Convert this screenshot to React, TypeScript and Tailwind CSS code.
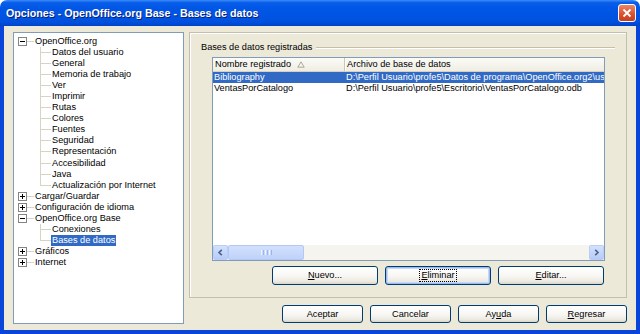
import React from "react"

type TreeItem = {
  label: string
  kind: "plus" | "minus" | "child"
  last?: boolean
  selected?: boolean
}

const TREE: TreeItem[] = [
  { label: "OpenOffice.org", kind: "minus" },
  { label: "Datos del usuario", kind: "child" },
  { label: "General", kind: "child" },
  { label: "Memoria de trabajo", kind: "child" },
  { label: "Ver", kind: "child" },
  { label: "Imprimir", kind: "child" },
  { label: "Rutas", kind: "child" },
  { label: "Colores", kind: "child" },
  { label: "Fuentes", kind: "child" },
  { label: "Seguridad", kind: "child" },
  { label: "Representación", kind: "child" },
  { label: "Accesibilidad", kind: "child" },
  { label: "Java", kind: "child" },
  { label: "Actualización por Internet", kind: "child", last: true },
  { label: "Cargar/Guardar", kind: "plus" },
  { label: "Configuración de idioma", kind: "plus" },
  { label: "OpenOffice.org Base", kind: "minus" },
  { label: "Conexiones", kind: "child" },
  { label: "Bases de datos", kind: "child", last: true, selected: true },
  { label: "Gráficos", kind: "plus" },
  { label: "Internet", kind: "plus" },
]

const ROWS = [
  {
    name: "Bibliography",
    path: "D:\\Perfil Usuario\\profe5\\Datos de programa\\OpenOffice.org2\\user",
    selected: true,
  },
  {
    name: "VentasPorCatalogo",
    path: "D:\\Perfil Usuario\\profe5\\Escritorio\\VentasPorCatalogo.odb",
    selected: false,
  },
]

// ── Tree ──────────────────────────────────────────────────────────────────

function Expander({ open }: { open: boolean }) {
  return (
    <svg width="9" height="9" viewBox="0 0 9 9" className="shrink-0">
      <rect x="0.5" y="0.5" width="8" height="8" fill="#fff" stroke="#848484" />
      <path d="M2 4.5h5" stroke="#000" />
      {!open && <path d="M4.5 2v5" stroke="#000" />}
    </svg>
  )
}

function TreeRow({ item }: { item: TreeItem }) {
  if (item.kind === "child") {
    return (
      <div className="h-[11.1px] flex items-center">
        <div className="w-[26px] shrink-0" />
        <div className="w-[1px] h-full flex flex-col shrink-0">
          <div className={`${item.last ? "h-[6px]" : "h-full"} w-[1px] bg-[#d8d4c4]`} />
        </div>
        <div className="w-[10px] h-[1px] bg-[#d8d4c4] shrink-0" />
        <span
          className={`px-[1px] leading-[11px] whitespace-nowrap ${
            item.selected ? "bg-[#316ac5] text-white" : "text-black"
          }`}
        >
          {item.label}
        </span>
      </div>
    )
  }
  return (
    <div className="h-[11.1px] flex items-center">
      <div className="w-[4px] shrink-0" />
      <Expander open={item.kind === "minus"} />
      <div className="w-[7px] h-[1px] bg-[#d8d4c4] shrink-0" />
      <span className="px-[1px] leading-[11px] whitespace-nowrap text-black">{item.label}</span>
    </div>
  )
}

// ── Buttons ───────────────────────────────────────────────────────────────

function XpButton({
  children,
  className,
  focused,
}: {
  children: React.ReactNode
  className: string
  focused?: boolean
}) {
  return (
    <button
      className={`${className} rounded-[3px] border border-[#003c74] bg-[linear-gradient(180deg,#ffffff_0%,#f7f6f2_55%,#ebe9e0_85%,#d9d5c8_100%)] flex items-center justify-center text-black ${
        focused ? "shadow-[inset_0_0_0_1px_#9ebbf0,inset_0_0_0_2px_#c6d8f8]" : ""
      }`}
    >
      <span className={`leading-[11px] px-[1px] ${focused ? "outline outline-1 outline-dotted outline-black" : ""}`}>
        {children}
      </span>
    </button>
  )
}

// ── Scrollbar ─────────────────────────────────────────────────────────────

function ScrollArrow({ dir }: { dir: "left" | "right" }) {
  return (
    <div className="w-[15px] h-[15px] shrink-0 rounded-[2px] border border-[#b9cdf6] bg-[linear-gradient(180deg,#d3e1fd,#b6cbf8)] flex items-center justify-center">
      <svg width="7" height="7" viewBox="0 0 7 7">
        <path
          d={dir === "left" ? "M4.8 0.8L2 3.5l2.8 2.7" : "M2.2 0.8L5 3.5 2.2 6.2"}
          fill="none"
          stroke="#4d6185"
          strokeWidth="1.6"
        />
      </svg>
    </div>
  )
}

function HScrollbar() {
  return (
    <div className="h-[15px] flex bg-[#f5f4ee] shrink-0">
      <ScrollArrow dir="left" />
      <div className="w-[76px] h-[15px] shrink-0 rounded-[2px] border border-[#b4c8f5] bg-[linear-gradient(180deg,#d2e0fd,#c0d2fa)] flex items-center justify-center gap-[1px]">
        <div className="w-[1px] h-[5px] bg-[#eef3fe]" />
        <div className="w-[1px] h-[5px] bg-[#9db5ee]" />
        <div className="w-[1px] h-[5px] bg-[#eef3fe]" />
        <div className="w-[1px] h-[5px] bg-[#9db5ee]" />
        <div className="w-[1px] h-[5px] bg-[#eef3fe]" />
        <div className="w-[1px] h-[5px] bg-[#9db5ee]" />
      </div>
      <div className="flex-1" />
      <ScrollArrow dir="right" />
    </div>
  )
}

// ── Main dialog ───────────────────────────────────────────────────────────

export default function App() {
  return (
    <div className="w-[640px] h-[334px] bg-white font-['Liberation_Sans',Arial,sans-serif] text-[9.2px]">
      <div className="w-[640px] h-[334px] flex flex-col rounded-t-[7px] overflow-hidden">
        {/* Title bar */}
        <div className="h-[26px] shrink-0 flex items-center bg-[linear-gradient(180deg,#3b8df8_0%,#0a5eeb_10%,#0056e6_30%,#0054e3_60%,#0050dc_85%,#0043c8_100%)]">
          <span className="ml-[6px] text-white font-bold text-[10.7px] [text-shadow:1px_1px_0_#0a1f7a]">
            Opciones - OpenOffice.org Base - Bases de datos
          </span>
          <div className="ml-auto mr-[4px] w-[18px] h-[18px] rounded-[3px] border border-white bg-[linear-gradient(180deg,#e9866b,#d9502f_60%,#c23f22)] flex items-center justify-center">
            <svg width="10" height="10" viewBox="0 0 10 10">
              <path d="M1.5 1.5l7 7M8.5 1.5l-7 7" stroke="#fff" strokeWidth="1.8" />
            </svg>
          </div>
        </div>

        {/* Body */}
        <div className="flex-1 flex gap-[5px] bg-[#ece9d8] border-x-[4px] border-b-[4px] border-[#0845d8] pl-[9px] pr-[9px] pt-[6px]">
          {/* Tree */}
          <div className="w-[171px] h-[292px] shrink-0 border border-[#7f9db9] bg-white pt-[2.5px] flex flex-col">
            {TREE.map((item, i) => (
              <TreeRow key={i} item={item} />
            ))}
          </div>

          {/* Right side */}
          <div className="flex-1 flex flex-col">
            <div className="h-[266px] border border-[#c3bfae] shadow-[inset_1px_1px_0_#ffffff] flex flex-col">
              <div className="mt-[9px] h-[12px] flex items-center pl-[11px] pr-[11px]">
                <span className="text-black whitespace-nowrap">Bases de datos registradas</span>
                <div className="flex-1 ml-[4px] h-[2px] border-t border-[#c3bfae] border-b border-b-white" />
              </div>

              {/* List view */}
              <div className="mt-[3px] ml-[22px] w-[393px] h-[204px] border border-[#7f9db9] bg-white flex flex-col">
                <div className="h-[14px] shrink-0 flex bg-[linear-gradient(180deg,#fbfbf8,#efede3)] border-b border-[#d6d2c2] text-black">
                  <div className="w-[132px] shrink-0 flex items-center pl-[2px] border-r border-[#c9c6b6] shadow-[1px_0_0_#ffffff]">
                    <span className="whitespace-nowrap">Nombre registrado</span>
                    <svg width="8" height="7" viewBox="0 0 8 7" className="ml-[6px]">
                      <path d="M4 0.8L7.2 6.2H0.8Z" fill="none" stroke="#aca899" />
                    </svg>
                  </div>
                  <div className="flex-1 flex items-center pl-[2px]">
                    <span className="whitespace-nowrap">Archivo de base de datos</span>
                  </div>
                </div>
                {ROWS.map((r) => (
                  <div
                    key={r.name}
                    className={`h-[11px] shrink-0 flex items-center overflow-hidden ${
                      r.selected ? "bg-[#316ac5] text-white" : "text-black"
                    }`}
                  >
                    <div className="w-[132px] shrink-0 pl-[1px] whitespace-nowrap leading-[11px]">{r.name}</div>
                    <div className="pl-[1px] whitespace-nowrap leading-[11px]">{r.path}</div>
                  </div>
                ))}
                <div className="flex-1" />
                <HScrollbar />
              </div>

              <div className="mt-[5px] flex justify-end gap-[7px] pr-[22px]">
                <XpButton className="w-[106px] h-[19px]">
                  <span className="underline">N</span>uevo...
                </XpButton>
                <XpButton className="w-[106px] h-[19px]" focused>
                  <span className="underline">E</span>liminar
                </XpButton>
                <XpButton className="w-[106px] h-[19px]">
                  <span className="underline">E</span>ditar...
                </XpButton>
              </div>
            </div>

            <div className="mt-[7px] flex justify-end gap-[7px]">
              <XpButton className="w-[81px] h-[18px]">Aceptar</XpButton>
              <XpButton className="w-[81px] h-[18px]">Cancelar</XpButton>
              <XpButton className="w-[81px] h-[18px]">
                Ay<span className="underline">u</span>da
              </XpButton>
              <XpButton className="w-[81px] h-[18px]">
                <span className="underline">R</span>egresar
              </XpButton>
            </div>
          </div>
        </div>
      </div>
    </div>
  )
}
